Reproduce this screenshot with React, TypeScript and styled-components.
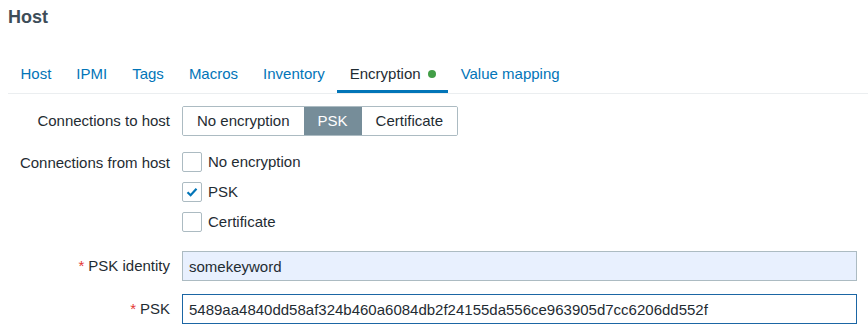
import styled, { createGlobalStyle } from 'styled-components';

const GlobalStyle = createGlobalStyle`
	html, body {
		margin: 0;
		padding: 0;
		background: #ffffff;
	}
	body {
		font-family: Arial, 'Liberation Sans', sans-serif;
		color: #1f2c33;
	}
`;

const Page = styled.div`
	padding-left: 8px;
`;

const Title = styled.h1`
	margin: 0;
	padding-top: 7px;
	font-size: 18px;
	line-height: 21px;
	font-weight: bold;
	color: #3d4d59;
`;

const TabList = styled.ul`
	display: flex;
	margin: 30px 0 0;
	padding: 0;
	list-style: none;
	border-bottom: 1px solid #ebeef0;
`;

const Tab = styled.li<{ $active?: boolean }>`
	display: flex;
	align-items: center;
	gap: 7px;
	padding: 7px 12.5px 7px;
	font-size: 15px;
	line-height: 18px;
	color: ${(p) => (p.$active ? '#1f2c33' : '#0275b8')};
	border-bottom: 3px solid ${(p) => (p.$active ? '#0275b8' : 'transparent')};
	cursor: pointer;
`;

const Dot = styled.span`
	width: 8px;
	height: 8px;
	border-radius: 50%;
	background: #429e47;
`;

const Form = styled.div`
	display: grid;
	grid-template-columns: 162px 1fr;
	column-gap: 12px;
	row-gap: 13px;
	margin-top: 12px;
	padding-right: 11px;
	font-size: 15px;
`;

const Label = styled.div<{ $height: number }>`
	text-align: right;
	line-height: ${(p) => p.$height}px;
	white-space: nowrap;
`;

const Asterisk = styled.span`
	color: #e33734;
	margin-right: 4px;
`;

const Segmented = styled.div`
	display: inline-flex;
	height: 30px;
	box-sizing: border-box;
	border: 1px solid #acbbc2;
	border-radius: 2px;
	overflow: hidden;
`;

const SegButton = styled.div<{ $active?: boolean }>`
	display: flex;
	align-items: center;
	padding: 0 14px;
	line-height: 28px;
	background: ${(p) => (p.$active ? '#768d99' : '#ffffff')};
	color: ${(p) => (p.$active ? '#ffffff' : '#1f2c33')};
`;

const CheckList = styled.div`
	display: flex;
	flex-direction: column;
	gap: 10px;
	padding: 3px 0 6px;
`;

const CheckRow = styled.label`
	display: flex;
	align-items: center;
	gap: 6px;
	height: 20px;
	line-height: 20px;
`;

const Box = styled.span`
	display: flex;
	align-items: center;
	justify-content: center;
	width: 20px;
	height: 20px;
	box-sizing: border-box;
	border: 1px solid #acbbc2;
	border-radius: 2px;
	background: #ffffff;
`;

const TextInput = styled.input<{ $focused?: boolean; $filled?: boolean }>`
	display: block;
	width: 100%;
	height: 30px;
	box-sizing: border-box;
	margin: 0;
	padding: 0 6px;
	font-family: Arial, 'Liberation Sans', sans-serif;
	font-size: 15px;
	color: #1f2c33;
	border: 1px solid ${(p) => (p.$focused ? '#1b66a4' : '#acbbc2')};
	border-radius: 0;
	background: ${(p) => (p.$filled ? '#e8f0fe' : '#ffffff')};
	outline: none;
`;

const tabs = ['Host', 'IPMI', 'Tags', 'Macros', 'Inventory', 'Encryption', 'Value mapping'];

const Checkbox = ({ checked, label }: { checked?: boolean; label: string }) => (
	<CheckRow>
		<Box>
			{checked && (
				<svg width="14" height="14" viewBox="0 0 14 14">
					<path d="M2.5 7.2 L5.6 10.2 L11.5 3.8" fill="none" stroke="#0275b8" strokeWidth="2.2" />
				</svg>
			)}
		</Box>
		<span>{label}</span>
	</CheckRow>
);

const App = () => {
	return (
		<Page>
			<GlobalStyle />
			<Title>Host</Title>
			<TabList>
				{tabs.map((name) => (
					<Tab key={name} $active={name === 'Encryption'}>
						{name}
						{name === 'Encryption' && <Dot />}
					</Tab>
				))}
			</TabList>
			<Form>
				<Label $height={30}>Connections to host</Label>
				<div>
					<Segmented>
						<SegButton>No encryption</SegButton>
						<SegButton $active>PSK</SegButton>
						<SegButton>Certificate</SegButton>
					</Segmented>
				</div>

				<Label $height={28}>Connections from host</Label>
				<CheckList>
					<Checkbox label="No encryption" />
					<Checkbox checked label="PSK" />
					<Checkbox label="Certificate" />
				</CheckList>

				<Label $height={30}>
					<Asterisk>*</Asterisk>PSK identity
				</Label>
				<TextInput $filled defaultValue="somekeyword" readOnly />

				<Label $height={30}>
					<Asterisk>*</Asterisk>PSK
				</Label>
				<TextInput $focused defaultValue="5489aa4840dd58af324b460a6084db2f24155da556ce963905d7cc6206dd552f" readOnly />
			</Form>
		</Page>
	);
};

export default App;
